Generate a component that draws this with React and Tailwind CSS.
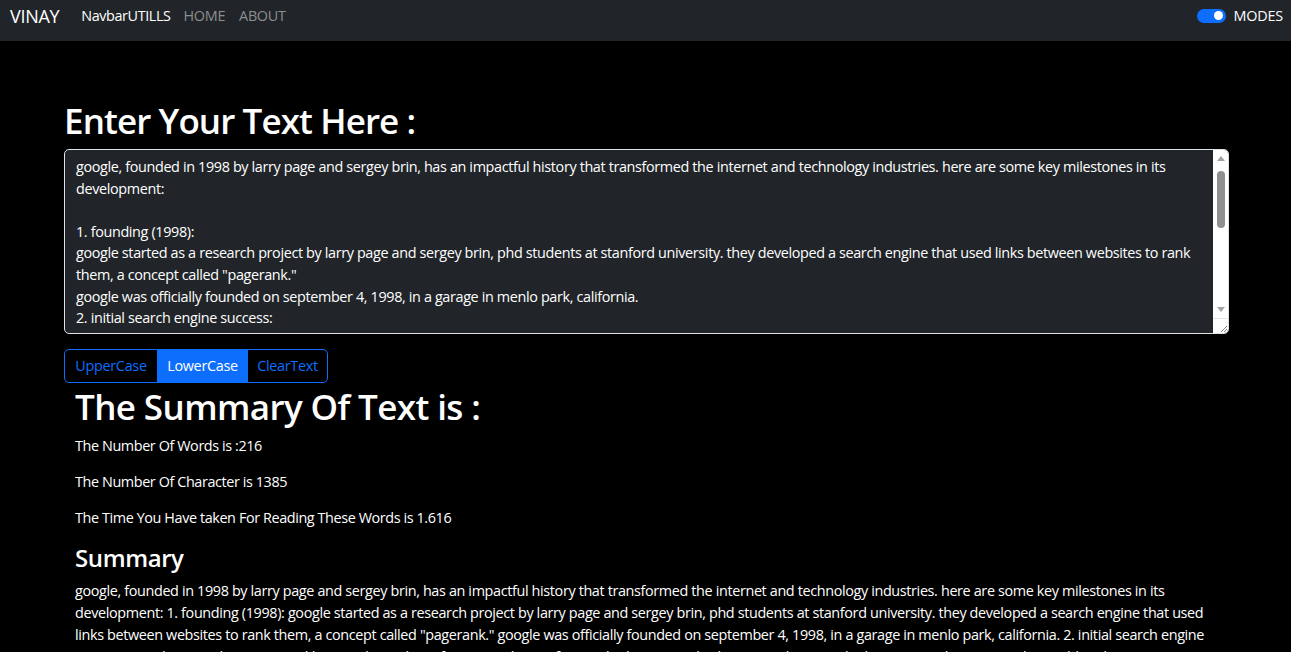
import React from "react";

const font = { fontFamily: '"Open Sans", "Noto Sans", Arial, sans-serif' };

const taLines = [
  "google, founded in 1998 by larry page and sergey brin, has an impactful history that transformed the internet and technology industries. here are some key milestones in its",
  "development:",
  "\u00a0",
  "1. founding (1998):",
  "google started as a research project by larry page and sergey brin, phd students at stanford university. they developed a search engine that used links between websites to rank",
  "them, a concept called \"pagerank.\"",
  "google was officially founded on september 4, 1998, in a garage in menlo park, california.",
  "2. initial search engine success:",
];

const sumLines = [
  "google, founded in 1998 by larry page and sergey brin, has an impactful history that transformed the internet and technology industries. here are some key milestones in its",
  "development: 1. founding (1998): google started as a research project by larry page and sergey brin, phd students at stanford university. they developed a search engine that used",
  "links between websites to rank them, a concept called \"pagerank.\" google was officially founded on september 4, 1998, in a garage in menlo park, california. 2. initial search engine",
  "success: google's search engine quickly gained popularity for its simple interface and relevant results. by 2000, it became the largest search engine in the world and",
];

export default function App() {
  return (
    <div className="h-[652px] bg-black text-white overflow-hidden" style={font}>
      <nav className="h-[41px] bg-[#212529] pl-[10px] pr-[8px]">
        <div className="h-[32px] flex items-center">
          <span className="text-[18px] text-white mr-[22px] tracking-[-0.3px]">VINAY</span>
          <span className="text-[14.4px] text-white mr-[13px] tracking-[-0.4px]">NavbarUTILLS</span>
          <span className="text-[14.4px] text-[#8c8e90] mr-[14px] tracking-[-0.3px]">HOME</span>
          <span className="text-[14.4px] text-[#8c8e90] tracking-[-0.3px]">ABOUT</span>
          <div className="ml-auto flex items-center gap-[8px]">
            <div className="w-[29px] h-[14px] rounded-full bg-[#0d6efd] flex items-center justify-end pr-[3px]">
              <div className="w-[9px] h-[9px] rounded-full bg-white" />
            </div>
            <span className="text-[14.4px] tracking-[-0.2px]">MODES</span>
          </div>
        </div>
      </nav>

      <div className="pl-[64px] pr-[62px] pt-[59px]">
        <h1 className="text-[35px] font-semibold leading-[42px] tracking-[-0.9px] mb-[7px]">Enter Your Text Here :</h1>
        <div className="h-[185px] bg-[#212529] border border-[#dee2e6] rounded-[5px] flex overflow-hidden">
          <div className="flex-1 pl-[11px] pt-[6px] text-[14.4px] leading-[21.6px] tracking-[-0.36px] whitespace-nowrap overflow-hidden">
            {taLines.map((l, i) => (
              <div key={i}>{l}</div>
            ))}
          </div>
          <div className="w-[15px] bg-white flex flex-col items-center">
            <div className="h-[17px] flex items-center justify-center">
              <svg width="8" height="5" viewBox="0 0 8 5"><path d="M0 5 L4 0 L8 5 Z" fill="#a3a3a3" /></svg>
            </div>
            <div className="w-[8px] h-[57px] rounded-full bg-[#8f8f8f] mt-[4px]" />
            <div className="flex-1" />
            <div className="h-[17px] flex items-center justify-center">
              <svg width="8" height="5" viewBox="0 0 8 5"><path d="M0 0 L4 5 L8 0 Z" fill="#a3a3a3" /></svg>
            </div>
            <div className="w-[15px] h-[15px] flex items-end justify-end border-t border-[#e5e5e5]">
              <svg width="8" height="8" viewBox="0 0 8 8">
                <path d="M7 1 L1 7 M7 4 L4 7" stroke="#888" strokeWidth="1" />
              </svg>
            </div>
          </div>
        </div>

        <div className="mt-[15px] inline-flex h-[34px] border border-[#0d6efd] rounded-[5px] overflow-hidden text-[14.4px] tracking-[-0.3px]">
          <div className="w-[92px] flex items-center justify-center text-[#0d6efd]">UpperCase</div>
          <div className="w-[91px] flex items-center justify-center bg-[#0d6efd] text-white">LowerCase</div>
          <div className="w-[79px] flex items-center justify-center text-[#0d6efd]">ClearText</div>
        </div>

        <div className="px-[11px]">
          <h1 className="text-[35px] font-semibold leading-[42px] tracking-[-0.6px] mt-[3px] mb-[7px]">The Summary Of Text is :</h1>
          <p className="text-[14.4px] leading-[21.6px] tracking-[-0.4px] mb-[14.4px]">The Number Of Words is :216</p>
          <p className="text-[14.4px] leading-[21.6px] tracking-[-0.4px] mb-[14.4px]">The Number Of Character is 1385</p>
          <p className="text-[14.4px] leading-[21.6px] tracking-[-0.4px] mb-[14.4px]">The Time You Have taken For Reading These Words is 1.616</p>
          <h2 className="text-[24px] font-semibold leading-[30px] tracking-[-0.4px] mt-[4px] mb-[7px]">Summary</h2>
          <div className="text-[14.4px] leading-[22px] tracking-[-0.36px] whitespace-nowrap">
            {sumLines.map((l, i) => (
              <div key={i}>{l}</div>
            ))}
          </div>
        </div>
      </div>
    </div>
  );
}
